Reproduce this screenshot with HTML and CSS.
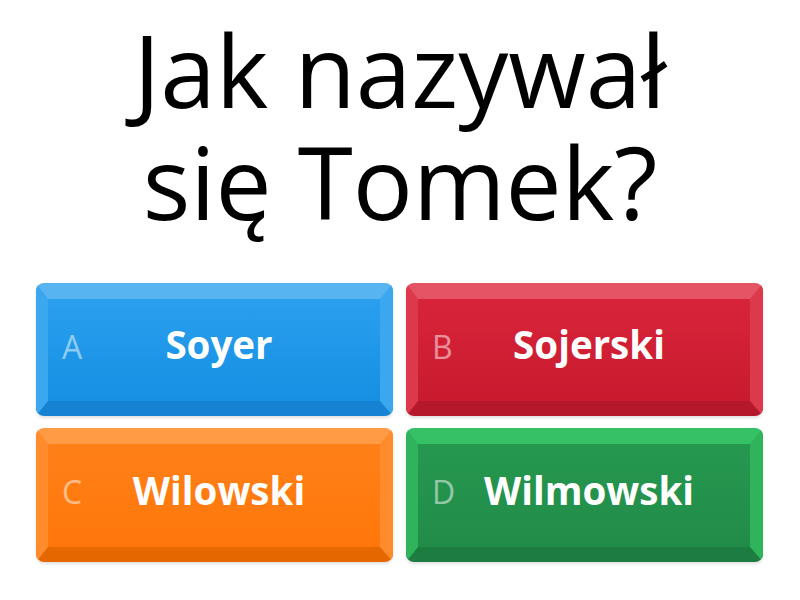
FILE: index.html
```html
<!DOCTYPE html>
<html lang="pl">
<head>
<meta charset="utf-8">
<link rel="stylesheet" href="styles.css">
</head>
<body>
<div class="page">
  <h1 class="title">Jak nazywał<br>się Tomek?</h1>
  <div class="grid">
    <div class="btn blue"><span class="letter">A</span><span class="label">Soyer</span></div>
    <div class="btn red"><span class="letter">B</span><span class="label">Sojerski</span></div>
    <div class="btn orange"><span class="letter">C</span><span class="label">Wilowski</span></div>
    <div class="btn green"><span class="letter">D</span><span class="label">Wilmowski</span></div>
  </div>
</div>
</body>
</html>
```

FILE: styles.css
```css
html, body {
  margin: 0;
  padding: 0;
  background: #ffffff;
}
.page {
  width: 800px;
  height: 600px;
  font-family: "Open Sans", "DejaVu Sans", sans-serif;
}
.title {
  margin: 13px 0 0 0;
  font-size: 100px;
  line-height: 112px;
  font-weight: 400;
  text-align: center;
  color: #000;
}
.grid {
  margin-top: 46px;
  padding: 0 37px 0 36px;
  display: grid;
  grid-template-columns: 357px 357px;
  grid-template-rows: 133px 134px;
  column-gap: 13px;
  row-gap: 12px;
}
.btn {
  position: relative;
  box-sizing: border-box;
  border-style: solid;
  border-width: 16px 13px 15px 12px;
  border-radius: 8px;
  padding-bottom: 12px;
  display: flex;
  align-items: center;
  justify-content: center;
  box-shadow: 0 2px 3px rgba(0,0,0,0.12);
}
.letter {
  position: absolute;
  left: 14px;
  margin-top: 4px;
  font-size: 32px;
  font-weight: 400;
  color: rgba(255,255,255,0.5);
}
.label {
  padding-left: 10px;
  font-size: 38.5px;
  font-weight: 700;
  color: #ffffff;
}
.blue {
  background: linear-gradient(#2a9fee, #1690e3);
  border-top-color: #58b4f1;
  border-left-color: #3aa7ef;
  border-right-color: #3aa7ef;
  border-bottom-color: #1683d2;
}
.red {
  background: linear-gradient(#d8243a, #c81b2e);
  border-top-color: #e45464;
  border-left-color: #dc3a4c;
  border-right-color: #dc3a4c;
  border-bottom-color: #b5182a;
}
.orange {
  background: linear-gradient(#ff8018, #ff770a);
  border-top-color: #ff9a45;
  border-left-color: #ff8b2c;
  border-right-color: #ff8b2c;
  border-bottom-color: #e56700;
}
.green {
  background: linear-gradient(#269850, #218c48);
  border-top-color: #36c164;
  border-left-color: #2fb35b;
  border-right-color: #2fb35b;
  border-bottom-color: #1d7c3f;
}
```
